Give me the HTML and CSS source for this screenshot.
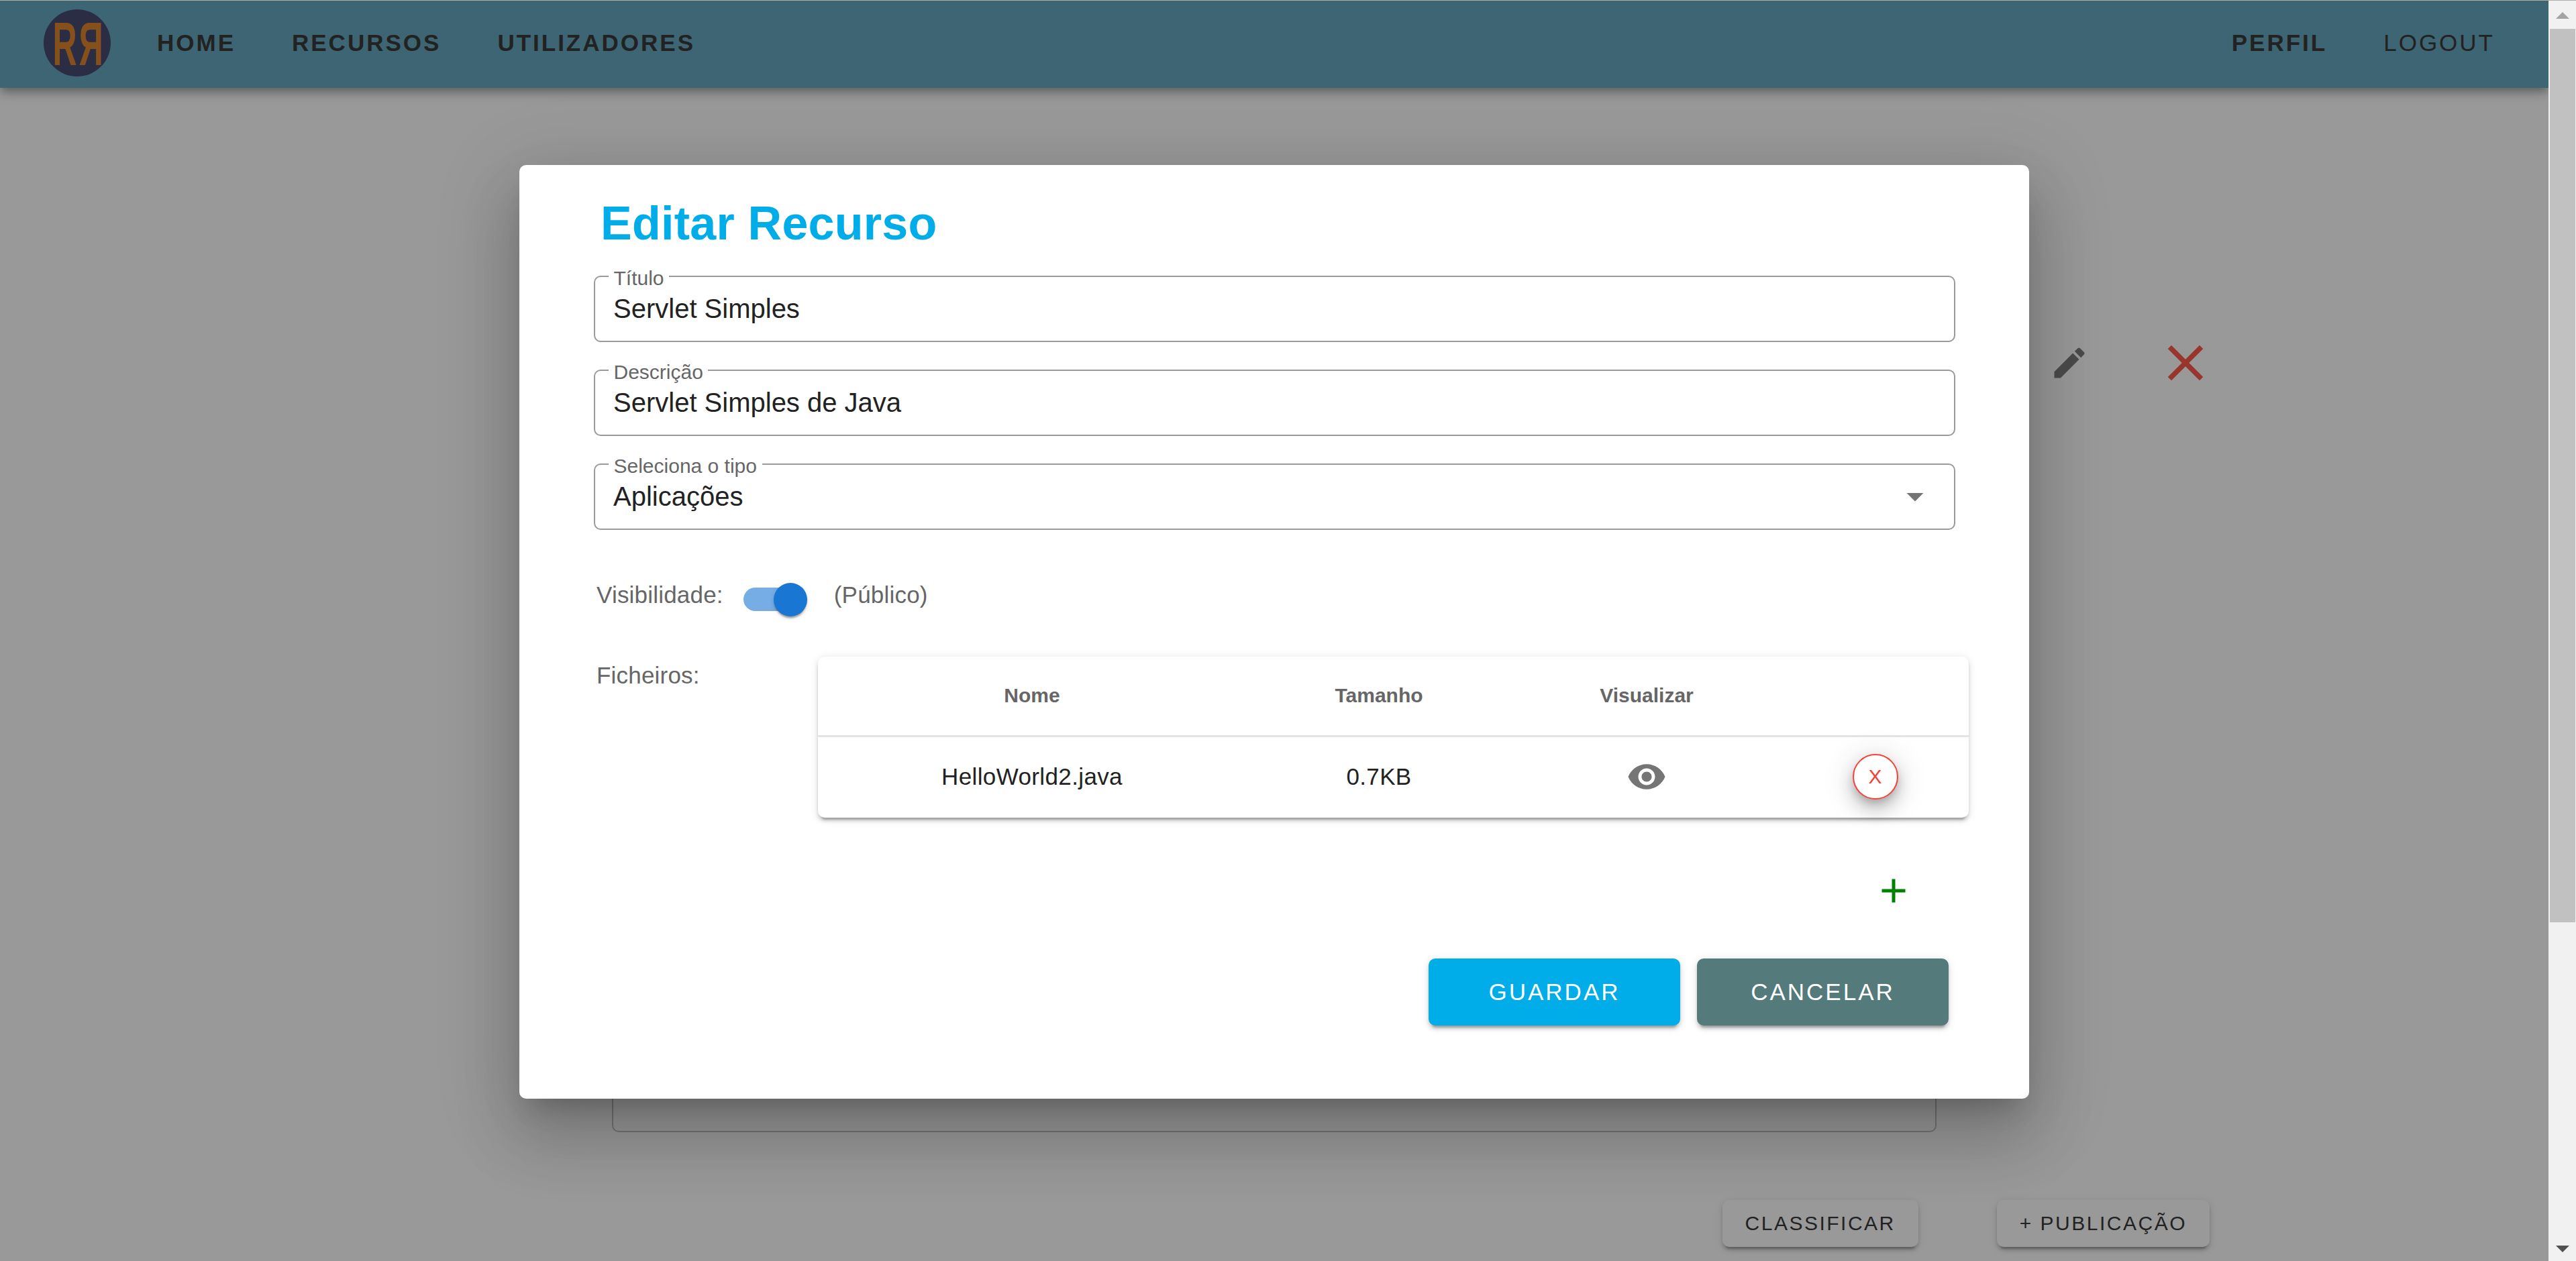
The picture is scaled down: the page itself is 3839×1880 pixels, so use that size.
FILE: index.html
```html
<!DOCTYPE html>
<html lang="pt">
<head>
<meta charset="utf-8">
<title>Editar Recurso</title>
<link rel="stylesheet" href="styles.css">
</head>
<body>
<div class="shell">
  <div class="viewport">
    <div class="page">
      <header class="appbar">
        <svg class="logo" viewBox="0 0 100 100">
          <circle class="logo-disc" cx="50" cy="50" r="50"/>
          <text class="logo-letter" transform="translate(13.4 83) scale(.55 1)">R</text>
          <text class="logo-letter" transform="translate(88.6 83) scale(-.55 1)">R</text>
        </svg>
        <nav class="nav">
          <a class="nav-link">HOME</a>
          <a class="nav-link">RECURSOS</a>
          <a class="nav-link">UTILIZADORES</a>
        </nav>
        <nav class="nav nav-right">
          <a class="nav-link">PERFIL</a>
          <a class="nav-link nav-thin">LOGOUT</a>
        </nav>
      </header>
      <main class="main">
        <div class="tools">
          <svg class="tool-edit" viewBox="0 0 24 24"><path d="M3 17.25V21h3.75L17.81 9.94l-3.75-3.75L3 17.25zM20.71 7.04c.39-.39.39-1.02 0-1.41l-2.34-2.34c-.39-.39-1.02-.39-1.41 0l-1.83 1.83 3.75 3.75 1.83-1.83z"/></svg>
          <svg class="tool-close" viewBox="0 0 24 24"><path d="M19 6.41L17.59 5 12 10.59 6.41 5 5 6.41 10.59 12 5 17.59 6.41 19 12 13.41 17.59 19 19 17.59 13.41 12z"/></svg>
        </div>
        <div class="content-box"></div>
        <div class="page-actions">
          <button class="page-btn">CLASSIFICAR</button>
          <button class="page-btn">+ PUBLICAÇÃO</button>
        </div>
      </main>
    </div>
    <div class="overlay">
      <section class="dialog">
        <h2 class="dialog-title">Editar Recurso</h2>
        <div class="fields">
          <fieldset class="field">
            <legend class="field-label">Título</legend>
            <div class="field-value">Servlet Simples</div>
          </fieldset>
          <fieldset class="field">
            <legend class="field-label">Descrição</legend>
            <div class="field-value">Servlet Simples de Java</div>
          </fieldset>
          <fieldset class="field">
            <legend class="field-label">Seleciona o tipo</legend>
            <div class="field-value field-select">
              <span>Aplicações</span>
              <svg class="caret" viewBox="0 0 24 24"><path d="M7 10l5 5 5-5z"/></svg>
            </div>
          </fieldset>
        </div>
        <div class="visibility">
          <span class="muted visibility-text">Visibilidade:</span>
          <span class="switch"><span class="switch-track"></span><span class="switch-thumb"></span></span>
          <span class="muted visibility-text">(Público)</span>
        </div>
        <div class="files">
          <span class="muted files-label">Ficheiros:</span>
          <div class="card">
            <div class="row row-head">
              <span>Nome</span>
              <span>Tamanho</span>
              <span>Visualizar</span>
              <span></span>
            </div>
            <div class="row row-body">
              <span>HelloWorld2.java</span>
              <span>0.7KB</span>
              <svg class="eye" viewBox="0 0 24 24"><path d="M12 4.5C7 4.5 2.73 7.61 1 12c1.73 4.39 6 7.5 11 7.5s9.27-3.11 11-7.5c-1.73-4.39-6-7.5-11-7.5zM12 17c-2.76 0-5-2.24-5-5s2.24-5 5-5 5 2.24 5 5-2.24 5-5 5zm0-8c-1.66 0-3 1.34-3 3s1.34 3 3 3 3-1.34 3-3-1.34-3-3-3z"/></svg>
              <button class="remove">X</button>
            </div>
          </div>
        </div>
        <div class="add-row">
          <svg class="add" viewBox="0 0 24 24"><path d="M19 13h-6v6h-2v-6H5v-2h6V5h2v6h6v2z"/></svg>
        </div>
        <div class="dialog-actions">
          <button class="btn btn-save">GUARDAR</button>
          <button class="btn btn-cancel">CANCELAR</button>
        </div>
      </section>
    </div>
  </div>
  <aside class="scrollbar">
    <span class="arrow-up"></span>
    <span class="thumb"></span>
    <span class="arrow-down"></span>
  </aside>
</div>
</body>
</html>
```

FILE: styles.css
```css
* { box-sizing: border-box; }

html, body {
  margin: 0;
  width: 3839px;
  height: 1880px;
  overflow: hidden;
}

body {
  border-top: 1px solid #aeaea8;
  background: #fff;
  font-family: "Liberation Sans", Arial, sans-serif;
  color: #222;
}

.shell {
  display: flex;
  height: 1879px;
}

.viewport {
  position: relative;
  width: 3798px;
  height: 100%;
  overflow: hidden;
}

.page {
  height: 100%;
  background: #fff;
}

/* App bar */
.appbar {
  display: flex;
  align-items: center;
  height: 130px;
  padding: 0 80px 4px 65px;
  background: #67a8c1;
  box-shadow: 0 5px 10px -2.5px rgba(0,0,0,.2), 0 10px 12.5px 0 rgba(0,0,0,.14), 0 2.5px 25px 0 rgba(0,0,0,.12);
}

.logo { width: 100px; height: 100px; flex: none; overflow: visible; }
.logo-disc { fill: #464b71; }
.logo-letter {
  fill: #de852f;
  font-family: "Liberation Sans", Arial, sans-serif;
  font-size: 91px;
  font-weight: 700;
}

.nav {
  display: flex;
  gap: 84px;
  margin-left: 69px;
}

.nav-right { margin-left: auto; }

.nav-link {
  font-size: 35px;
  font-weight: 700;
  line-height: 40px;
  letter-spacing: 3px;
  color: #393939;
}

.nav-thin { font-weight: 400; }

/* Page behind the dialog */
.main { display: block; }

.tools {
  display: flex;
  justify-content: flex-end;
  align-items: flex-start;
  gap: 98px;
  height: 90px;
  margin-top: 365px;
  padding-right: 496px;
}

.tool-edit { width: 60px; height: 60px; margin-top: 15px; fill: #7d7d7d; }
.tool-close { width: 90px; height: 90px; fill: #fe5a4a; }

.content-box {
  width: 1974px;
  height: 688px;
  margin: 414px 0 0 912px;
  border: 2px solid rgba(0,0,0,.23);
  border-radius: 10px;
}

.page-actions {
  display: flex;
  justify-content: flex-end;
  gap: 117px;
  margin-top: 101px;
  padding-right: 505px;
}

.page-btn {
  height: 70px;
  padding: 0 34px;
  border: 0;
  border-radius: 10px;
  background: #fff;
  color: #393939;
  font: 400 30px "Liberation Sans", Arial, sans-serif;
  letter-spacing: 2.5px;
  box-shadow: 0 7.5px 2.5px -5px rgba(0,0,0,.2), 0 5px 5px 0 rgba(0,0,0,.14), 0 2.5px 12.5px 0 rgba(0,0,0,.12);
}

/* Modal */
.overlay {
  position: absolute;
  inset: 0;
  display: flex;
  align-items: center;
  justify-content: center;
  padding-top: 3px;
  background: rgba(0,0,0,.4);
}

.dialog {
  width: 2250px;
  height: 1392px;
  padding: 45px 110px 0 111px;
  border-radius: 10px;
  background: #fff;
  box-shadow: 0 27.5px 37.5px -17.5px rgba(0,0,0,.2), 0 60px 95px 7.5px rgba(0,0,0,.14), 0 22.5px 115px 20px rgba(0,0,0,.12);
}

.dialog-title {
  margin: 0 0 36px 10px;
  font-size: 70px;
  font-weight: 700;
  line-height: 84px;
  letter-spacing: .25px;
  color: #00ade9;
}

.fields {
  display: flex;
  flex-direction: column;
  gap: 41px;
}

.field {
  display: block;
  height: 99px;
  min-width: 0;
  margin: 0;
  padding: 0 20px;
  border: 2px solid #9a9a9a;
  border-radius: 10px;
}

.field-label {
  position: relative;
  top: 3px;
  padding: 0 7.5px;
  font-size: 30px;
  line-height: 2px;
  color: #666;
}

.field-value {
  margin: 17px 0 0 7px;
  font-size: 40px;
  line-height: 60px;
  color: #222;
}

.field-select {
  display: flex;
  justify-content: space-between;
  align-items: center;
}

.caret {
  width: 60px;
  height: 60px;
  margin: 0 8px 0 0;
  fill: #757575;
}

.muted {
  font-size: 35px;
  line-height: 40px;
  letter-spacing: .2px;
  color: #666;
}

.visibility {
  display: flex;
  align-items: flex-start;
  height: 53px;
  margin: 76px 0 0 4px;
}

.visibility-text { margin-top: 1px; }

.switch {
  position: relative;
  width: 95px;
  height: 50px;
  margin: 3px 40px 0 30px;
}

.switch-track {
  display: block;
  width: 85px;
  height: 35px;
  margin-top: 7px;
  border-radius: 17.5px;
  background: #75ade4;
}

.switch-thumb {
  position: absolute;
  top: 0;
  right: 0;
  width: 50px;
  height: 50px;
  border-radius: 50%;
  background: #1976d2;
  box-shadow: 0 5px 2.5px -2.5px rgba(0,0,0,.2), 0 2.5px 2.5px 0 rgba(0,0,0,.14), 0 2.5px 7.5px 0 rgba(0,0,0,.12);
}

.files {
  display: flex;
  align-items: flex-start;
  margin: 60px -20px 0 4px;
}

.files-label {
  width: 330px;
  margin-top: 8px;
}

.card {
  width: 1715px;
  height: 240px;
  border-radius: 10px;
  background: #fff;
  box-shadow: 0 7.5px 2.5px -5px rgba(0,0,0,.2), 0 5px 5px 0 rgba(0,0,0,.14), 0 2.5px 12.5px 0 rgba(0,0,0,.12);
}

.row {
  display: grid;
  grid-template-columns: 638px 396px 402px 279px;
  align-items: center;
  justify-items: center;
}

.row-head {
  height: 120px;
  padding-bottom: 2px;
  border-bottom: 3px solid #e4e4e4;
  font-size: 30px;
  font-weight: 700;
  color: #666;
}

.row-body {
  height: 120px;
  padding-bottom: 2px;
  font-size: 35px;
  letter-spacing: .375px;
  color: #222;
}

.eye { width: 60px; height: 60px; fill: #757575; }

.remove {
  width: 68px;
  height: 68px;
  padding: 0;
  border: 2px solid #f44336;
  border-radius: 50%;
  background: #fff;
  color: #f44336;
  font: 400 30px "Liberation Sans", Arial, sans-serif;
  box-shadow: 0 7.5px 12.5px -2.5px rgba(0,0,0,.2), 0 15px 25px 2.5px rgba(0,0,0,.14), 0 5px 45px 5px rgba(0,0,0,.12);
}

.add-row {
  display: flex;
  justify-content: flex-end;
  margin-top: 79px;
  padding-right: 62px;
}

.add { width: 60px; height: 60px; fill: #008000; }

.dialog-actions {
  display: flex;
  justify-content: flex-end;
  gap: 25px;
  margin-top: 71px;
  padding-right: 10px;
}

.btn {
  width: 375px;
  height: 100px;
  border: 0;
  border-radius: 10px;
  color: #fff;
  font: 400 35px "Liberation Sans", Arial, sans-serif;
  letter-spacing: 3px;
  box-shadow: 0 7.5px 2.5px -5px rgba(0,0,0,.2), 0 5px 5px 0 rgba(0,0,0,.14), 0 2.5px 12.5px 0 rgba(0,0,0,.12);
}

.btn-save { background: #00ade9; }
.btn-cancel { background: #547a7b; }

/* Scrollbar */
.scrollbar {
  display: flex;
  flex-direction: column;
  align-items: center;
  width: 41px;
  height: 100%;
  padding: 17px 0 13px;
  background: #f1f1f1;
}

.arrow-up, .arrow-down {
  width: 0;
  height: 0;
  border-left: 10px solid transparent;
  border-right: 10px solid transparent;
}

.arrow-up { border-bottom: 10px solid #a3a3a3; }
.arrow-down { margin-top: auto; border-top: 10px solid #505050; }

.thumb {
  width: 38px;
  height: 1332px;
  margin: 15px 0 0 1px;
  background: #c1c1c1;
}
```
